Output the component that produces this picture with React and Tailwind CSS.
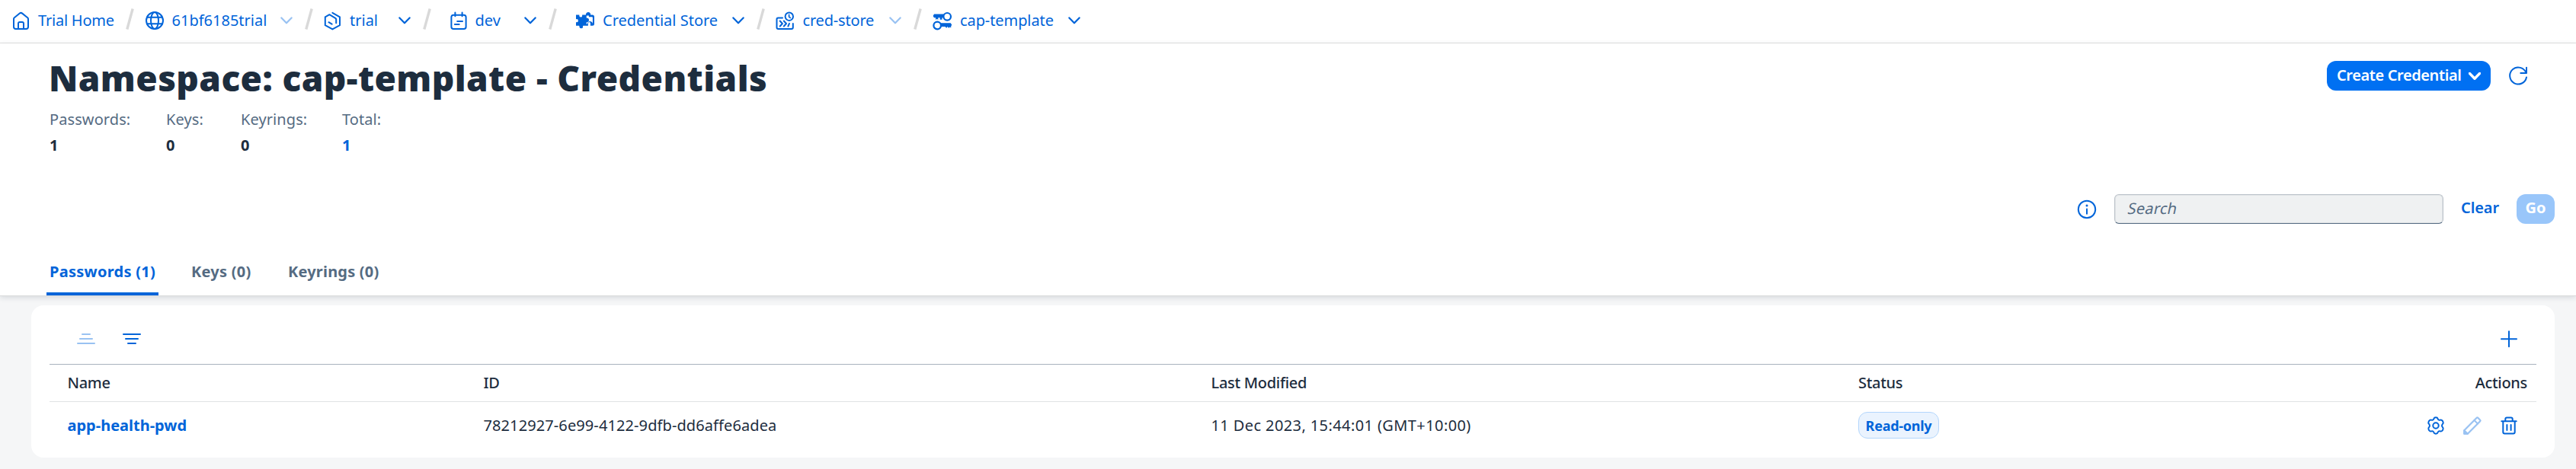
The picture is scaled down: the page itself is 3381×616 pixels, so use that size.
import React from "react";

const stroke = { fill: "none", stroke: "currentColor", strokeWidth: 2, strokeLinecap: "round", strokeLinejoin: "round" };

function Icon({ children, className = "", size = 24, ...rest }) {
  return (
    <svg width={size} height={size} viewBox={`0 0 ${size} ${size}`} className={`block shrink-0 overflow-visible ${className}`} {...stroke} {...rest}>
      {children}
    </svg>
  );
}

const HomeIcon = () => (
  <Icon>
    <path d="M2 9.9v10.400q0 2.700 2.700 2.700h13.600q2.700 0 2.700-2.700V9.900q0-1-.8-1.700l-7-5.600q-1.700-1.400-3.400 0l-7 5.600q-.8.700-.8 1.700z" />
    <path d="M8 23v-7q0-1.900 1.900-1.900h3.200q1.900 0 1.900 1.900v7" />
  </Icon>
);

const GlobeIcon = () => (
  <Icon>
    <circle cx="12" cy="12" r="11" />
    <ellipse cx="12" cy="12" rx="5" ry="11" />
    <path d="M2 7.8h20M2 16.200h20" />
  </Icon>
);

const SubaccountIcon = () => (
  <Icon>
    <path d="M12.400 1.800l9.600 5.500v10.900l-9.600 5.200-9.600-5.200V7.300l5.600-3.100 7.800 4.600q1 .6 1 1.800v4.600" />
    <path d="M7.400 14.200l4.200 2.500" />
  </Icon>
);

const SpaceIcon = () => (
  <Icon>
    <rect x="2.400" y="4.700" width="19.200" height="18.300" rx="2.800" />
    <path d="M7.400 1.600v4.600M16.600 1.600v4.600M10.200 12.900h6.800M6.900 17.100h5.800" />
  </Icon>
);

const PuzzleIcon = () => (
  <Icon>
    <path
      stroke="none"
      fill="currentColor"
      fillRule="evenodd"
      d="M0 4.600h4.400q-.5 3 1.800 3t1.900-3H13V3.800q0-1 .6-1.600.9-1.200 2.600-1.200 1.500 0 2.400 1.200.5.700.5 1.600v.8h2.400q2.500 0 2.500 2.500v9.200q0 2.500-2.500 2.500h-2.600v-3q0-1.700-1.500-1.700t-1.500 1.700v3h-6.500q-.6.500-.4 1.700.1 1.800-2.200 1.800t-2.300-1.800q.1-1.200-.5-1.700H0v-4.700q2.900.8 2.900-1.900T0 10.300z M13.700 7.100v1.500q3.300 0 3.300 2.700 0 1.700-1.300 2.400-.9.500-2 .5v2.200h1.200q.7-3.500 3.300-3.500 3.500 0 3.700 3.500v-8.300q0-.9-.9-.9h-4.100V5.600h-3z"
    />
  </Icon>
);

const InstanceIcon = () => (
  <Icon>
    <circle cx="17.800" cy="6.700" r="5.200" />
    <path d="M17.600 4.300v2.800l1.700 1.300" strokeWidth="1.700" />
    <path d="M9 8.500H3.200q-1.700 0-1.700 1.700V21q0 2 2 2h17.300q2 0 2-2v-5" />
    <path d="M5.700 12.500l3.200 3.500-3.200 3.500M10.800 12.500l3.200 3.500-3.200 3.500M18 15.800l-1.600 3.700" />
  </Icon>
);

const KeysIcon = () => (
  <Icon>
    <circle cx="18.200" cy="6.800" r="4.800" strokeWidth="2.200" />
    <circle cx="5.200" cy="18.500" r="4.800" strokeWidth="2.200" />
    <path stroke="none" fill="currentColor" d="M1 3.600h13v4.700h-2.500v2.400H8.700V8.300H6.300v2.800L4.800 9.800l-1.700 1.300V8.300H1L-.4 6z" />
    <path stroke="none" fill="currentColor" d="M9 15.200h13.700l1.500 2.200-1 2.400v1.700l-1.500-1-1.500 1.300-1.600-1.800-1.400 1.800-1.700-1.800H9z" />
  </Icon>
);

const Chevron = ({ disabled, className = "", weight = 2.2 }) => (
  <svg width="16" height="10" viewBox="0 0 16 10" className={`block shrink-0 ${disabled ? "text-[#99c2f2]" : ""} ${className}`} {...stroke} strokeWidth={weight}>
    <path d="M1.400 1.400l6.600 6.900 6.600-6.900" />
  </svg>
);

const Slash = () => (
  <svg width="11" height="28" viewBox="0 0 11 28" className="-mt-1 block shrink-0" fill="none" stroke="#d9d9d9" strokeWidth="3.400">
    <path d="M1.800 27.500L9.200.5" />
  </svg>
);

const crumbs = [
  { label: "Trial Home", icon: HomeIcon, box: "w-[165px] pl-4", text: "ml-[10px] tracking-[-0.21px]" },
  { label: "61bf6185trial", icon: GlobeIcon, box: "w-[224px] pl-[14.5px]", text: "ml-[11px]", chevron: "off" },
  { label: "trial", icon: SubaccountIcon, box: "w-[144px] pl-[13px]", text: "ml-[11px]", chevron: "on" },
  { label: "dev", icon: SpaceIcon, box: "w-[154px] pl-[23.5px]", text: "ml-[10px]", chevron: "on" },
  { label: "Credential Store", icon: PuzzleIcon, box: "w-[262px] pl-[25px]", text: "ml-[11px]", chevron: "on" },
  { label: "cred-store", icon: InstanceIcon, box: "w-[195px] pl-[14px]", text: "ml-[11.5px] tracking-[-0.18px]", chevron: "off" },
  { label: "cap-template", icon: KeysIcon, box: "w-[223.5px] pl-[14.5px]", text: "ml-[11.5px] tracking-[-0.09px]", chevron: "on" },
];

const stats = [
  { label: "Passwords:", value: "1", box: "w-[153px]" },
  { label: "Keys:", value: "0", box: "w-[98px]" },
  { label: "Keyrings:", value: "0", box: "w-[133px]" },
  { label: "Total:", value: "1", box: "w-[100px]", link: true },
];

const cols = "grid grid-cols-[546px_955px_849.5px_1fr] items-center pl-[23.5px]";

export default function App() {
  return (
    <div className="flex h-[616px] w-full flex-col overflow-hidden bg-[#f5f6f7] font-['Noto_Sans',sans-serif] text-[20px] leading-7 text-[#1d2d3e]">
      <nav className="flex h-[57px] shrink-0 items-center border-b border-[#e1e1e1] bg-white pb-0.5 text-[#0064d9]">
        {crumbs.map((c, i) => (
          <React.Fragment key={c.label}>
            {i > 0 && <Slash />}
            <div className={`flex shrink-0 items-center ${c.box}`}>
              <c.icon />
              <span className={`whitespace-nowrap pb-px ${c.text}`}>{c.label}</span>
              {c.chevron && <Chevron disabled={c.chevron === "off"} className="ml-auto mr-4" />}
            </div>
          </React.Fragment>
        ))}
      </nav>

      <header className="flex h-[332px] shrink-0 flex-col border-b border-[#d9dadb] bg-white pt-[21px] shadow-[0_2px_7px_rgba(34,53,72,0.14)]">
        <div className="flex items-start justify-between pl-16 pr-[63px]">
          <h1 className="text-[46px] font-black leading-[48px] tracking-[0.42px]">Namespace: cap-template - Credentials</h1>
          <div className="mt-0.5 flex items-center">
            <button className="flex h-[39px] w-[215px] items-center rounded-xl bg-[#0070f2] pl-[13px] text-white">
              <span className="whitespace-nowrap pb-px font-semibold tracking-[-0.4px]">Create Credential</span>
              <Chevron weight={3.4} className="ml-auto mr-[13px]" />
            </button>
            <button className="ml-[23px] text-[#0064d9]">
              <Icon size={26}>
                <path d="M24 1.700v7.300h-7.700" />
                <path d="M23.500 8.700A11 11 0 1 0 24 14.500" />
              </Icon>
            </button>
          </div>
        </div>

        <div className="mt-[17px] flex pl-[65px]">
          {stats.map((s) => (
            <div key={s.label} className={s.box}>
              <div className="tracking-[0.09px] text-[#556b82]">{s.label}</div>
              <div className={`mt-1.5 font-bold ${s.link ? "text-[#0064d9]" : ""}`}>{s.value}</div>
            </div>
          ))}
        </div>

        <div className="mt-[50px] flex h-[39px] shrink-0 items-center justify-end pr-7 text-[#0064d9]">
          <Icon size={26} className="mr-[23px]">
            <circle cx="13" cy="13" r="11.200" />
            <path d="M13 12.500v6.200" />
            <circle cx="13" cy="8" r="1.500" fill="currentColor" stroke="none" />
          </Icon>
          <div className="flex h-[39px] w-[432px] items-center rounded-md border border-[#bcc3ca] border-b-[#556b82] bg-[#eff1f2] pl-[17px] text-[#556b82] shadow-[inset_0_0_0_1px_#e0e3e6]">
            <span className="inline-block -skew-x-12 pb-px tracking-[0.2px]">Search</span>
          </div>
          <span className="ml-[23px] w-[73px] pb-[3px] font-semibold tracking-[-0.1px]">Clear</span>
          <button className="flex h-[39px] w-[50px] items-center justify-center rounded-xl bg-[#99c6fa] pb-[3px] font-bold text-white">Go</button>
        </div>

        <div className="mt-[34px] flex h-[60px] shrink-0 pl-[61px] font-bold text-[#556b82]">
          <div className="flex w-[147px] items-center rounded-t-sm border-b-4 border-[#0064d9] pl-1 pt-px tracking-[0.27px] text-[#0064d9]">Passwords (1)</div>
          <div className="flex w-[127px] items-center border-b-4 border-transparent pl-[43px] pt-px tracking-[0.25px]">Keys (0)</div>
          <div className="flex items-center border-b-4 border-transparent pl-[43px] pt-px tracking-[0.2px]">Keyrings (0)</div>
        </div>
      </header>

      <main className="ml-[41px] mr-7 mt-3 h-[200px] shrink-0 rounded-2xl bg-white px-6">
        <div className="flex h-[77px] items-center pl-9 pr-6 pt-[11px] text-[#0064d9]">
          <Icon className="text-[#99c2f2]">
            <path d="M7 6h10M4 12h16M1 18h22" />
          </Icon>
          <Icon className="ml-9">
            <path d="M1 6h22M4 12h16M7 18h10" />
          </Icon>
          <Icon className="ml-auto">
            <path d="M12 2.200v20M2 12.200h20" />
          </Icon>
        </div>
        <div className={`${cols} h-[49px] border-t border-[#a8b2bd] font-medium tracking-[-0.3px]`}>
          <span>Name</span>
          <span>ID</span>
          <span>Last Modified</span>
          <span className="flex justify-between pr-3">
            <span>Status</span>
            <span>Actions</span>
          </span>
        </div>
        <div className={`${cols} h-[62px] border-t border-[#e0e2e4]`}>
          <a className="pt-px font-bold text-[#0064d9]">app-health-pwd</a>
          <span className="pt-px tracking-[0.1px]">78212927-6e99-4122-9dfb-dd6affe6adea</span>
          <span className="pt-px tracking-[0.4px]">11 Dec 2023, 15:44:01 (GMT+10:00)</span>
          <div className="flex items-center pr-6 text-[#0064d9]">
            <span className="flex h-[35px] w-[106px] items-center justify-center rounded-xl border border-[#b3d6fc] bg-[#eaf3fe] text-[18px] font-bold tracking-[-0.25px]">Read-only</span>
            <div className="ml-auto flex gap-6">
              <Icon>
                <path d="M12 1.200c1.700 0 2.300.500 2.600 1.700.400 1.500 1.500 2.200 3 1.700 1.400-.4 2.300-.2 3.200 1.200l.7 1.300c.7 1.300.3 2.100-.7 3-1 1-1 2.800 0 3.800 1 .9 1.400 1.700.7 3l-.7 1.300c-.9 1.400-1.800 1.600-3.200 1.200-1.500-.5-2.600.2-3 1.700-.3 1.200-.9 1.700-2.600 1.700s-2.300-.5-2.600-1.700c-.4-1.500-1.500-2.200-3-1.700-1.400.4-2.300.2-3.200-1.200l-.7-1.300c-.7-1.300-.3-2.100.7-3 1-1 1-2.800 0-3.800-1-.9-1.400-1.700-.7-3l.7-1.300c.9-1.400 1.800-1.600 3.200-1.200 1.500.5 2.600-.2 3-1.700.3-1.200.9-1.700 2.600-1.700z" />
                <circle cx="12" cy="12" r="3.700" />
              </Icon>
              <Icon className="text-[#99c2f2]">
                <path d="M1.300 22.700v-4.500L17.700 1.800q.8-.8 1.600 0l2.900 2.900q.8.800 0 1.600L5.800 22.700z" strokeWidth="2.200" />
                <path d="M14.500 5l4.500 4.500" />
                <path d="M1.300 18.200l4.500 4.500H1.300z" fill="currentColor" />
              </Icon>
              <Icon>
                <path d="M2.300 6.200h19.400M7.300 6V3.500q0-1.900 1.900-1.900h5.600q1.900 0 1.900 1.900V6M4.300 6.400v14q0 2 2 2h11.400q2 0 2-2v-14M9.400 11v7M14.600 11v7" />
              </Icon>
            </div>
          </div>
        </div>
      </main>
    </div>
  );
}
